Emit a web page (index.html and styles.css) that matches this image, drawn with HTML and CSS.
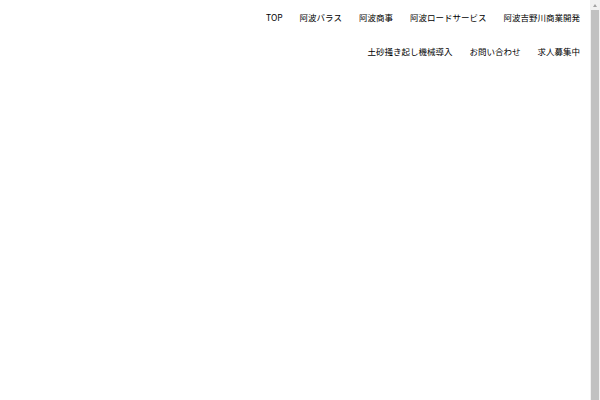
FILE: index.html
```html
<!DOCTYPE html>
<html lang="ja">
<head>
<meta charset="utf-8">
<title>阿波</title>
<link rel="stylesheet" href="styles.css">
</head>
<body>
<div class="page">
  <header class="site-header">
    <nav class="global-nav">
      <ul class="nav-list">
        <li class="nav-item"><a href="#">TOP</a></li>
        <li class="nav-item"><a href="#">阿波バラス</a></li>
        <li class="nav-item"><a href="#">阿波商事</a></li>
        <li class="nav-item"><a href="#">阿波ロードサービス</a></li>
        <li class="nav-item"><a href="#">阿波吉野川商業開発</a></li>
        <li class="nav-item"><a href="#">土砂掻き起し機械導入</a></li>
        <li class="nav-item"><a href="#">お問い合わせ</a></li>
        <li class="nav-item"><a href="#">求人募集中</a></li>
      </ul>
    </nav>
  </header>
  <main class="content"></main>
</div>
<div class="scrollbar" aria-hidden="true">
  <div class="scroll-button"><span class="scroll-arrow"></span></div>
  <div class="scroll-thumb"></div>
</div>
</body>
</html>
```
FILE: styles.css
```css
html, body {
  margin: 0;
  padding: 0;
  background: #fff;
}
body {
  display: flex;
  height: 400px;
  overflow: hidden;
  font-family: "Noto Sans CJK JP", "Noto Sans", sans-serif;
  color: #000;
}
.page {
  flex: 1;
  min-width: 0;
}
.site-header {
  display: flex;
  justify-content: flex-end;
  padding-right: 10px;
}
.global-nav {
  width: 340px;
}
.nav-list {
  list-style: none;
  margin: 0;
  padding: 0;
  display: flex;
  flex-wrap: wrap;
  justify-content: flex-end;
  column-gap: 17px;
}
.nav-item {
  height: 34px;
  display: flex;
  align-items: center;
  font-size: 8.5px;
  white-space: nowrap;
}
.nav-item a {
  color: inherit;
  text-decoration: none;
}
.scrollbar {
  width: 10px;
  flex: none;
  background: #f1f1f1;
  display: flex;
  flex-direction: column;
}
.scroll-button {
  height: 10px;
  flex: none;
  display: flex;
  align-items: center;
  justify-content: center;
}
.scroll-arrow {
  width: 0;
  height: 0;
  border-left: 2.5px solid transparent;
  border-right: 2.5px solid transparent;
  border-bottom: 3px solid #a3a3a3;
}
.scroll-thumb {
  flex: 1;
  margin: 0 1px;
  background: #c1c1c1;
}
```
